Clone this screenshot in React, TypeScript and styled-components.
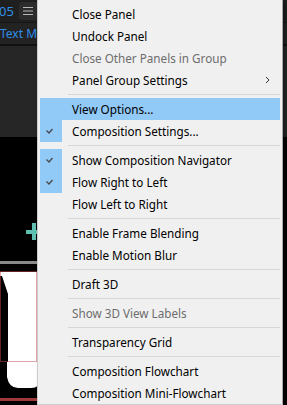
import styled, { createGlobalStyle } from "styled-components";

const GlobalStyle = createGlobalStyle`
    html, body {
        margin: 0;
        padding: 0;
        background: #1c1c1c;
    }
    * {
        box-sizing: border-box;
    }
`;

type Item =
    | { kind: "sep" }
    | {
          kind: "item";
          label: string;
          checked?: boolean;
          disabled?: boolean;
          hover?: boolean;
          submenu?: boolean;
      };

const items: Item[] = [
    { kind: "item", label: "Close Panel" },
    { kind: "item", label: "Undock Panel" },
    { kind: "item", label: "Close Other Panels in Group", disabled: true },
    { kind: "item", label: "Panel Group Settings", submenu: true },
    { kind: "sep" },
    { kind: "item", label: "View Options...", hover: true },
    { kind: "item", label: "Composition Settings...", checked: true },
    { kind: "sep" },
    { kind: "item", label: "Show Composition Navigator", checked: true },
    { kind: "item", label: "Flow Right to Left", checked: true },
    { kind: "item", label: "Flow Left to Right" },
    { kind: "sep" },
    { kind: "item", label: "Enable Frame Blending" },
    { kind: "item", label: "Enable Motion Blur" },
    { kind: "sep" },
    { kind: "item", label: "Draft 3D" },
    { kind: "sep" },
    { kind: "item", label: "Show 3D View Labels", disabled: true },
    { kind: "sep" },
    { kind: "item", label: "Transparency Grid" },
    { kind: "sep" },
    { kind: "item", label: "Composition Flowchart" },
    { kind: "item", label: "Composition Mini-Flowchart" },
];

export default function App() {
    return (
        <Screen>
            <GlobalStyle />
            <TabBar>
                <TabLabel>05</TabLabel>
                <MenuButton>
                    <svg width="10" height="8" viewBox="0 0 10 8">
                        <path d="M0 0.5H10M0 4H10M0 7.5H10" stroke="#b8b8b8" strokeWidth="1" />
                    </svg>
                </MenuButton>
            </TabBar>
            <SubBar>
                <SubLabel>Text Message</SubLabel>
            </SubBar>
            <ToolPanel />
            <Viewer>
                <svg width="287" height="266" viewBox="0 0 287 266">
                    <rect x="26" y="93" width="12" height="4" fill="#5cbfb2" />
                    <rect x="32" y="86" width="4" height="17" fill="#5cbfb2" />
                    <rect x="0" y="124" width="40" height="3" fill="#8a8a8a" />
                    <path d="M0 135H40V242Q40 251 31 251H18Q9 251 7 240V225H0Z" fill="#ffffff" />
                    <path d="M0 139H2L8 157V225H0Z" fill="#000000" />
                    <rect
                        x="0.5"
                        y="134.5"
                        width="36"
                        height="90"
                        fill="none"
                        stroke="#c44a4a"
                        strokeDasharray="1 1"
                    />
                    <rect x="0" y="261" width="40" height="3" fill="#a03a3a" />
                </svg>
            </Viewer>
            <Menu>
                {items.map((item, i) =>
                    item.kind === "sep" ? (
                        <Separator key={i} />
                    ) : (
                        <Row key={i} $hover={item.hover} $disabled={item.disabled}>
                            <CheckBox $checked={item.checked}>
                                {item.checked && (
                                    <svg width="22" height="22" viewBox="0 0 22 22">
                                        <polyline
                                            points="6.5,10.5 9,13 12.5,9"
                                            fill="none"
                                            stroke="#4a4a4a"
                                            strokeWidth="1.3"
                                        />
                                    </svg>
                                )}
                            </CheckBox>
                            <Label>{item.label}</Label>
                            {item.submenu && (
                                <Arrow>
                                    <svg width="5" height="8" viewBox="0 0 5 8">
                                        <polyline
                                            points="1,1 4,4 1,7"
                                            fill="none"
                                            stroke="#333"
                                            strokeWidth="1"
                                        />
                                    </svg>
                                </Arrow>
                            )}
                        </Row>
                    )
                )}
            </Menu>
        </Screen>
    );
}

const Screen = styled.div`
    position: relative;
    width: 287px;
    height: 405px;
    overflow: hidden;
    display: flex;
    flex-direction: column;
    background: #1c1c1c;
    font-family: "Noto Sans", "Open Sans", sans-serif;
`;

const TabBar = styled.div`
    height: 23px;
    display: flex;
    align-items: center;
    gap: 5px;
    background: #1f1f1f;
    border-bottom: 1px solid #161616;
`;

const TabLabel = styled.span`
    color: #2f8fe8;
    font-size: 13px;
    margin-left: -1px;
`;

const MenuButton = styled.div`
    width: 19px;
    height: 18px;
    border-radius: 3px;
    background: #2c2c2c;
    display: flex;
    align-items: center;
    justify-content: center;
`;

const SubBar = styled.div`
    height: 23px;
    display: flex;
    align-items: center;
    background: #232323;
    border-bottom: 2px solid #111;
`;

const SubLabel = styled.span`
    width: 37px;
    overflow: hidden;
    color: #2f8fe8;
    font-size: 12px;
    white-space: nowrap;
`;

const ToolPanel = styled.div`
    height: 91px;
    background: #262626;
`;

const Viewer = styled.div`
    flex: 1;
    background: #000;
    svg {
        display: block;
    }
`;

const Menu = styled.div`
    position: absolute;
    left: 37px;
    top: 0;
    width: 246px;
    padding: 3px 2px 0 2px;
    background: #f0f0f0;
    border: 1px solid #cccccc;
    border-right-color: #a8a8a8;
    border-top: none;
    box-shadow: 2px 2px 3px rgba(0, 0, 0, 0.4);
`;

const Row = styled.div<{ $hover?: boolean; $disabled?: boolean }>`
    position: relative;
    height: 22px;
    display: flex;
    align-items: center;
    background: ${(p) => (p.$hover ? "#91c9f7" : "transparent")};
    color: ${(p) => (p.$disabled ? "#6d6d6d" : "#000")};
    font-size: 11.7px;
`;

const CheckBox = styled.div<{ $checked?: boolean }>`
    width: 22px;
    height: 22px;
    flex: none;
    background: ${(p) => (p.$checked ? "#91c9f7" : "transparent")};
    svg {
        display: block;
    }
`;

const Label = styled.span`
    margin-left: 10px;
    white-space: nowrap;
`;

const Arrow = styled.span`
    margin-left: auto;
    margin-right: 10px;
    display: flex;
`;

const Separator = styled.div`
    height: 7px;
    margin-left: 28px;
    display: flex;
    align-items: center;
    &::after {
        content: "";
        flex: 1;
        height: 1px;
        background: #d7d7d7;
    }
`;
